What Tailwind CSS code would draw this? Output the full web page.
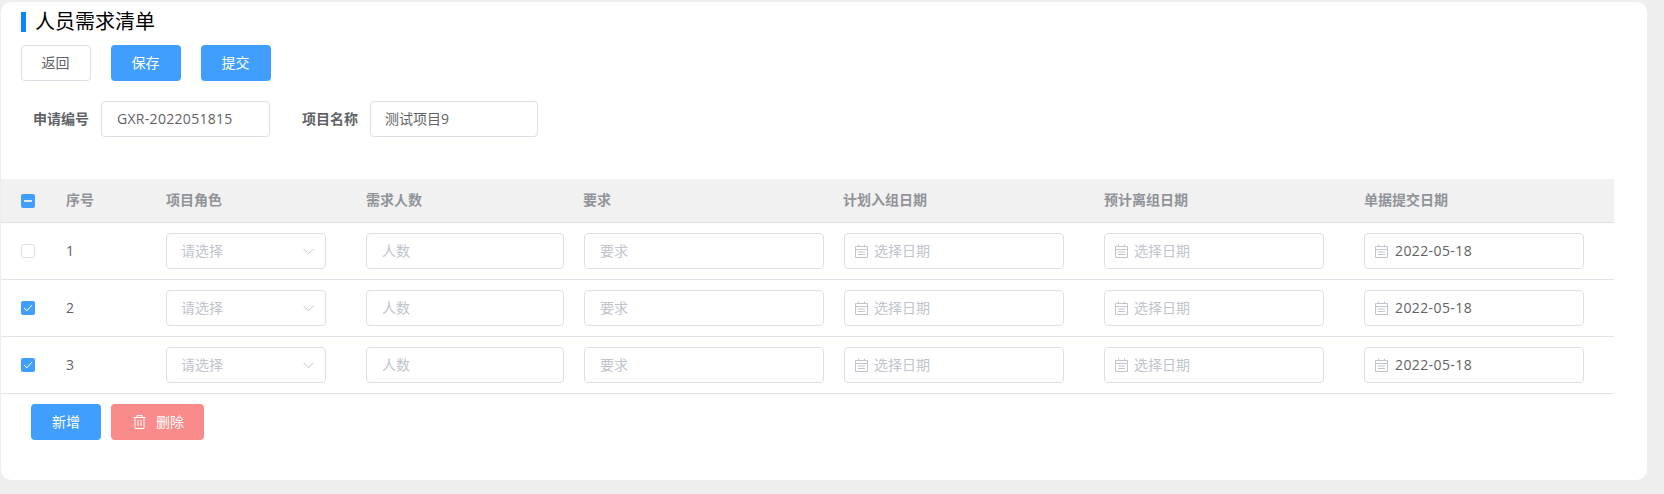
<!DOCTYPE html>
<html lang="zh-CN">
<head>
    <meta charset="UTF-8">
    <title>人员需求清单</title>
    <script src="https://cdn.jsdelivr.net/npm/@tailwindcss/browser@4"></script>
</head>
<body class="bg-[#eeeeee] h-[494px] overflow-hidden pt-[2px] pl-[1px] font-['Open_Sans','Noto_Sans_CJK_SC',sans-serif] text-[14px] text-[#606266]">
    <div class="bg-white w-[1646px] h-[478px] rounded-[10px] pt-[10px]">
        <!-- Title -->
        <div class="ml-5 border-l-[5px] border-[#0a84ff] pl-[9px] h-5 flex items-center text-[20px] text-black">人员需求清单</div>

        <!-- Actions -->
        <div class="flex gap-5 ml-5 mt-[13px]">
            <button class="w-[70px] h-9 rounded border border-[#dcdfe6] bg-white pb-[2px] pr-px">返回</button>
            <button class="w-[70px] h-9 rounded bg-[#409eff] text-white pb-[2px] pr-px">保存</button>
            <button class="w-[70px] h-9 rounded bg-[#409eff] text-white pb-[2px] pr-px">提交</button>
        </div>

        <!-- Form -->
        <div class="flex items-center mt-5 ml-8">
            <label class="w-[56px] font-bold mr-3 -mt-[2px]">申请编号</label>
            <input class="w-[169px] h-9 rounded border border-[#dcdfe6] px-[15px] pb-[2px] tracking-[0.3px] outline-none" value="GXR-2022051815">
            <label class="w-[56px] font-bold ml-8 mr-3 -mt-[2px]">项目名称</label>
            <input class="w-[168px] h-9 rounded border border-[#dcdfe6] pl-[14px] pr-[15px] pb-[2px] outline-none" value="测试项目9">
        </div>

        <!-- Table -->
        <div class="w-[1613px] mt-[42px]">
            <div class="grid grid-cols-[65px_100px_200px_218px_260px_260px_260px_250px] items-center h-[44px] bg-[#f1f1f1] border-b border-[#dfe3ea] font-bold text-[#909399]">
                <div class="pl-5">
                    <span class="w-[14px] h-[14px] rounded-[2px] bg-[#409eff] flex items-center justify-center"><span class="w-2 h-[2px] bg-white/80"></span></span>
                </div>
                <div class="-mt-[2px]">序号</div>
                <div class="-mt-[2px]">项目角色</div>
                <div class="-mt-[2px]">需求人数</div>
                <div class="-mt-[2px] -ml-px">要求</div>
                <div class="-mt-[2px] -ml-px">计划入组日期</div>
                <div class="-mt-[2px]">预计离组日期</div>
                <div class="-mt-[2px]">单据提交日期</div>
            </div>

            <!-- Row 1 -->
            <div class="grid grid-cols-[65px_100px_200px_218px_260px_260px_260px_250px] items-center h-[57px] border-b border-[#dfe3ea]">
                <div class="pl-5"><span class="block w-[14px] h-[14px] rounded-[2px] border border-[#dcdfe6] bg-white"></span></div>
                <div class="-mt-[2px]">1</div>
                <div class="relative w-[160px]">
                    <input class="w-full h-9 rounded border border-[#dcdfe6] pl-[14px] pr-[15px] pb-[2px] outline-none placeholder:text-[#c0c4cc]" placeholder="请选择">
                    <svg class="absolute right-[12px] top-[15px] w-[11px] h-[7px]" viewBox="0 0 11 7" fill="none" stroke="#c0c4cc"><path d="M.5.8l5 5 5-5"/></svg>
                </div>
                <div><input class="w-[198px] h-9 rounded border border-[#dcdfe6] px-[15px] pb-[2px] outline-none placeholder:text-[#c0c4cc]" placeholder="人数"></div>
                <div><input class="w-[240px] h-9 rounded border border-[#dcdfe6] px-[15px] pb-[2px] outline-none placeholder:text-[#c0c4cc]" placeholder="要求"></div>
                <div class="relative w-[220px]">
                    <svg class="absolute left-[11px] top-[11px] w-[13px] h-[14px]" viewBox="0 0 13 14" fill="none" stroke="#c0c4cc"><path d="M.5 2.5h12v11H.5zM.5 5.5h12M3.5.5v2M9.5.5v2M3 8h7M3 10.5h7"/></svg>
                    <input class="w-full h-9 rounded border border-[#dcdfe6] pl-[29px] pr-[15px] pb-[2px] outline-none placeholder:text-[#c0c4cc]" placeholder="选择日期">
                </div>
                <div class="relative w-[220px]">
                    <svg class="absolute left-[11px] top-[11px] w-[13px] h-[14px]" viewBox="0 0 13 14" fill="none" stroke="#c0c4cc"><path d="M.5 2.5h12v11H.5zM.5 5.5h12M3.5.5v2M9.5.5v2M3 8h7M3 10.5h7"/></svg>
                    <input class="w-full h-9 rounded border border-[#dcdfe6] pl-[29px] pr-[15px] pb-[2px] outline-none placeholder:text-[#c0c4cc]" placeholder="选择日期">
                </div>
                <div class="relative w-[220px]">
                    <svg class="absolute left-[11px] top-[11px] w-[13px] h-[14px]" viewBox="0 0 13 14" fill="none" stroke="#c0c4cc"><path d="M.5 2.5h12v11H.5zM.5 5.5h12M3.5.5v2M9.5.5v2M3 8h7M3 10.5h7"/></svg>
                    <input class="w-full h-9 rounded border border-[#dcdfe6] pl-[30px] pr-[15px] pb-[2px] tracking-[0.4px] outline-none" value="2022-05-18">
                </div>
            </div>

            <!-- Row 2 -->
            <div class="grid grid-cols-[65px_100px_200px_218px_260px_260px_260px_250px] items-center h-[57px] border-b border-[#dfe3ea]">
                <div class="pl-5">
                    <span class="w-[14px] h-[14px] rounded-[2px] bg-[#409eff] flex items-center justify-center">
                        <svg class="w-[10px] h-[8px]" viewBox="0 0 10 8" fill="none" stroke="#fff"><path d="M1 4l3 2.8L9 1"/></svg>
                    </span>
                </div>
                <div class="-mt-[2px]">2</div>
                <div class="relative w-[160px]">
                    <input class="w-full h-9 rounded border border-[#dcdfe6] pl-[14px] pr-[15px] pb-[2px] outline-none placeholder:text-[#c0c4cc]" placeholder="请选择">
                    <svg class="absolute right-[12px] top-[15px] w-[11px] h-[7px]" viewBox="0 0 11 7" fill="none" stroke="#c0c4cc"><path d="M.5.8l5 5 5-5"/></svg>
                </div>
                <div><input class="w-[198px] h-9 rounded border border-[#dcdfe6] px-[15px] pb-[2px] outline-none placeholder:text-[#c0c4cc]" placeholder="人数"></div>
                <div><input class="w-[240px] h-9 rounded border border-[#dcdfe6] px-[15px] pb-[2px] outline-none placeholder:text-[#c0c4cc]" placeholder="要求"></div>
                <div class="relative w-[220px]">
                    <svg class="absolute left-[11px] top-[11px] w-[13px] h-[14px]" viewBox="0 0 13 14" fill="none" stroke="#c0c4cc"><path d="M.5 2.5h12v11H.5zM.5 5.5h12M3.5.5v2M9.5.5v2M3 8h7M3 10.5h7"/></svg>
                    <input class="w-full h-9 rounded border border-[#dcdfe6] pl-[29px] pr-[15px] pb-[2px] outline-none placeholder:text-[#c0c4cc]" placeholder="选择日期">
                </div>
                <div class="relative w-[220px]">
                    <svg class="absolute left-[11px] top-[11px] w-[13px] h-[14px]" viewBox="0 0 13 14" fill="none" stroke="#c0c4cc"><path d="M.5 2.5h12v11H.5zM.5 5.5h12M3.5.5v2M9.5.5v2M3 8h7M3 10.5h7"/></svg>
                    <input class="w-full h-9 rounded border border-[#dcdfe6] pl-[29px] pr-[15px] pb-[2px] outline-none placeholder:text-[#c0c4cc]" placeholder="选择日期">
                </div>
                <div class="relative w-[220px]">
                    <svg class="absolute left-[11px] top-[11px] w-[13px] h-[14px]" viewBox="0 0 13 14" fill="none" stroke="#c0c4cc"><path d="M.5 2.5h12v11H.5zM.5 5.5h12M3.5.5v2M9.5.5v2M3 8h7M3 10.5h7"/></svg>
                    <input class="w-full h-9 rounded border border-[#dcdfe6] pl-[30px] pr-[15px] pb-[2px] tracking-[0.4px] outline-none" value="2022-05-18">
                </div>
            </div>

            <!-- Row 3 -->
            <div class="grid grid-cols-[65px_100px_200px_218px_260px_260px_260px_250px] items-center h-[57px] border-b border-[#dfe3ea]">
                <div class="pl-5">
                    <span class="w-[14px] h-[14px] rounded-[2px] bg-[#409eff] flex items-center justify-center">
                        <svg class="w-[10px] h-[8px]" viewBox="0 0 10 8" fill="none" stroke="#fff"><path d="M1 4l3 2.8L9 1"/></svg>
                    </span>
                </div>
                <div class="-mt-[2px]">3</div>
                <div class="relative w-[160px]">
                    <input class="w-full h-9 rounded border border-[#dcdfe6] pl-[14px] pr-[15px] pb-[2px] outline-none placeholder:text-[#c0c4cc]" placeholder="请选择">
                    <svg class="absolute right-[12px] top-[15px] w-[11px] h-[7px]" viewBox="0 0 11 7" fill="none" stroke="#c0c4cc"><path d="M.5.8l5 5 5-5"/></svg>
                </div>
                <div><input class="w-[198px] h-9 rounded border border-[#dcdfe6] px-[15px] pb-[2px] outline-none placeholder:text-[#c0c4cc]" placeholder="人数"></div>
                <div><input class="w-[240px] h-9 rounded border border-[#dcdfe6] px-[15px] pb-[2px] outline-none placeholder:text-[#c0c4cc]" placeholder="要求"></div>
                <div class="relative w-[220px]">
                    <svg class="absolute left-[11px] top-[11px] w-[13px] h-[14px]" viewBox="0 0 13 14" fill="none" stroke="#c0c4cc"><path d="M.5 2.5h12v11H.5zM.5 5.5h12M3.5.5v2M9.5.5v2M3 8h7M3 10.5h7"/></svg>
                    <input class="w-full h-9 rounded border border-[#dcdfe6] pl-[29px] pr-[15px] pb-[2px] outline-none placeholder:text-[#c0c4cc]" placeholder="选择日期">
                </div>
                <div class="relative w-[220px]">
                    <svg class="absolute left-[11px] top-[11px] w-[13px] h-[14px]" viewBox="0 0 13 14" fill="none" stroke="#c0c4cc"><path d="M.5 2.5h12v11H.5zM.5 5.5h12M3.5.5v2M9.5.5v2M3 8h7M3 10.5h7"/></svg>
                    <input class="w-full h-9 rounded border border-[#dcdfe6] pl-[29px] pr-[15px] pb-[2px] outline-none placeholder:text-[#c0c4cc]" placeholder="选择日期">
                </div>
                <div class="relative w-[220px]">
                    <svg class="absolute left-[11px] top-[11px] w-[13px] h-[14px]" viewBox="0 0 13 14" fill="none" stroke="#c0c4cc"><path d="M.5 2.5h12v11H.5zM.5 5.5h12M3.5.5v2M9.5.5v2M3 8h7M3 10.5h7"/></svg>
                    <input class="w-full h-9 rounded border border-[#dcdfe6] pl-[30px] pr-[15px] pb-[2px] tracking-[0.4px] outline-none" value="2022-05-18">
                </div>
            </div>
        </div>

        <!-- Table actions -->
        <div class="flex gap-[10px] ml-[30px] mt-[10px]">
            <button class="w-[70px] h-9 rounded bg-[#409eff] text-white pb-[2px]">新增</button>
            <button class="w-[93px] h-9 rounded bg-[#f98b8b] text-white flex items-center pl-[22px] gap-[10px]">
                <svg class="w-[13px] h-[14px]" viewBox="0 0 13 14" fill="none" stroke="#fff"><path d="M.5 2.5h12M4 2.5v-2h5v2M2 2.5v11h9v-11M5 5v6M8 5v6"/></svg>
                <span class="-mt-[2px]">删除</span>
            </button>
        </div>
    </div>
</body>
</html>
